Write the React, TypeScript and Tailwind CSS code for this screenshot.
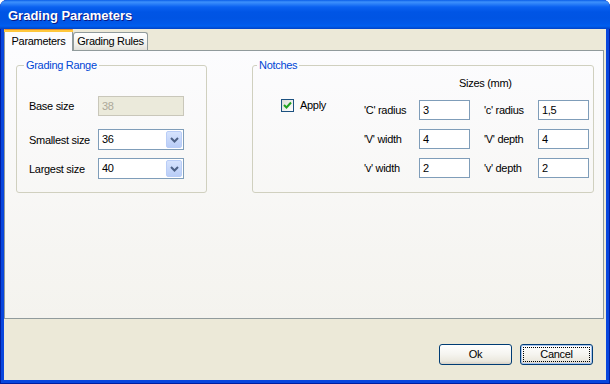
export default function App() {
  const label = "text-[11px] leading-[14px] text-black";
  const input =
    "h-[20px] w-[51px] border border-[#7f9db9] bg-white pl-[3px] flex items-center text-[11px]";
  const Combo = ({ value }: { value: string }) => (
    <div className="w-[86px] h-[21px] border border-[#7f9db9] bg-white flex items-center">
      <span className="flex-1 pl-[3px]">{value}</span>
      <div className="w-[16px] h-[17px] mr-[1px] rounded-[2px] border border-[#b9cdf7] bg-[linear-gradient(to_bottom,#d6e3fd,#b9cdf7)] flex items-center justify-center">
        <svg width="9" height="6" viewBox="0 0 9 6">
          <path d="M1 1 L4.5 4.5 L8 1" stroke="#4d6185" strokeWidth="2" fill="none" />
        </svg>
      </div>
    </div>
  );
  const Row = ({
    l1,
    v1,
    l2,
    v2,
    mt,
  }: {
    l1: string;
    v1: string;
    l2: string;
    v2: string;
    mt: string;
  }) => (
    <div className={`flex items-center h-[20px] ${mt}`}>
      <span className={`${label} w-[55px]`}>{l1}</span>
      <div className={input}>{v1}</div>
      <span className={`${label} w-[54px] ml-[14px]`}>{l2}</span>
      <div className={input}>{v2}</div>
    </div>
  );
  return (
    <div className="w-[610px] h-[384px] bg-white font-['Liberation_Sans',Arial,sans-serif] text-[11px] tracking-[-0.3px] text-black">
      <div className="w-full h-full flex flex-col rounded-t-[7px] overflow-hidden bg-[#0846dd] shadow-[inset_1px_0_#001ea0,inset_-1px_0_#001ea0,inset_0_-1px_#001ea0]">
        <div className="h-[29px] shrink-0 flex items-center pl-[8px] pt-[2px] bg-[linear-gradient(to_bottom,#0a5ee8_0px,#3d91fc_2px,#2a7ff8_4px,#0a61f0_7px,#0055e5_12px,#0054e3_18px,#0059ea_24px,#005fef_26px,#0042c7_29px)]">
          <span className="text-white font-bold text-[13px] tracking-normal [text-shadow:1px_1px_0_#0a1883]">
            Grading Parameters
          </span>
        </div>
        <div className="flex-1 mx-[4px] mb-[4px] bg-[#ece9d8] flex flex-col">
          {/* tabs */}
          <div className="flex items-end h-[21px]">
            <div className="relative z-10 -mb-px h-[22px] w-[69px] flex flex-col bg-[#fcfcfe] border-x border-[#919b9c] rounded-t-[3px]">
              <div className="-mx-px h-[1px] bg-[#e68b2c] rounded-t-[2px]" />
              <div className="-mx-px h-[2px] bg-[#ffc73c]" />
              <div className="flex-1 flex items-center justify-center pb-[1px]">Parameters</div>
            </div>
            <div className="h-[18px] w-[75px] flex items-center justify-center border-x border-t border-[#919b9c] rounded-t-[3px] bg-[linear-gradient(to_bottom,#ffffff,#f3f3ef_60%,#e3e1d9)]">
              Grading Rules
            </div>
          </div>
          {/* panel */}
          <div className="mr-[2px] h-[269px] border border-[#919b9c] bg-[linear-gradient(to_bottom,#fcfcfe,#f4f3ee)] flex items-start">
            <fieldset className="ml-[11px] mt-[7px] w-[191px] h-[135px] border border-[#d0d0bf] rounded-[3px]">
              <legend className="ml-[7px] px-[2px] h-[14px] leading-[14px] text-[#0046d5]">
                Grading Range
              </legend>
              <div className="flex flex-col pl-[12px]">
                <div className="flex items-center mt-[24px] h-[20px]">
                  <span className={`${label} w-[69px]`}>Base size</span>
                  <div className="w-[86px] h-[20px] border border-[#c9c7ba] bg-[#ebeadb] text-[#aca899] pl-[3px] flex items-center">
                    38
                  </div>
                </div>
                <div className="flex items-center mt-[13px] h-[21px]">
                  <span className={`${label} w-[69px]`}>Smallest size</span>
                  <Combo value="36" />
                </div>
                <div className="flex items-center mt-[8px] h-[21px]">
                  <span className={`${label} w-[69px]`}>Largest size</span>
                  <Combo value="40" />
                </div>
              </div>
            </fieldset>
            <fieldset className="ml-[45px] mt-[7px] w-[342px] h-[135px] border border-[#d0d0bf] rounded-[3px]">
              <legend className="ml-[4px] px-[2px] h-[14px] leading-[14px] text-[#0046d5]">
                Notches
              </legend>
              <div className="flex flex-col">
                <div className="mt-[4px] h-[14px] leading-[14px] pl-[206px]">Sizes (mm)</div>
                <div className="flex mt-[10px]">
                  <div className="w-[111px] pl-[28px] -mt-[1px] flex items-start gap-[6px]">
                    <div className="w-[13px] h-[13px] border border-[#1c5180] bg-[linear-gradient(135deg,#dcdcd7,#ffffff)] flex items-center justify-center">
                      <svg width="9" height="9" viewBox="0 0 9 9">
                        <path d="M1 4 L3.5 6.5 L8 1.5" stroke="#21a121" strokeWidth="2" fill="none" />
                      </svg>
                    </div>
                    <span className="leading-[13px]">Apply</span>
                  </div>
                  <div className="flex flex-col">
                    <Row l1="'C' radius" v1="3" l2="'c' radius" v2="1,5" mt="" />
                    <Row l1="'V' width" v1="4" l2="'V' depth" v2="4" mt="mt-[9px]" />
                    <Row l1="'v' width" v1="2" l2="'v' depth" v2="2" mt="mt-[9px]" />
                  </div>
                </div>
              </div>
            </fieldset>
          </div>
          {/* buttons */}
          <div className="mt-[25px] flex justify-end gap-[8px] mr-[13px]">
            <div className="w-[73px] h-[21px] rounded-[3px] border border-[#003c74] bg-[linear-gradient(to_bottom,#ffffff,#f5f4ef_50%,#ebe8de_85%,#d6d0c5)] flex items-center justify-center">
              Ok
            </div>
            <div className="w-[73px] h-[21px] rounded-[3px] border border-[#003c74] bg-[linear-gradient(to_bottom,#ffffff,#f5f4ef_50%,#ebe8de_85%,#d6d0c5)] p-[2px] flex shadow-[inset_0_0_0_1px_#a8c4f0]">
              <div className="flex-1 border border-dotted border-black flex items-center justify-center">
                Cancel
              </div>
            </div>
          </div>
        </div>
      </div>
    </div>
  );
}
